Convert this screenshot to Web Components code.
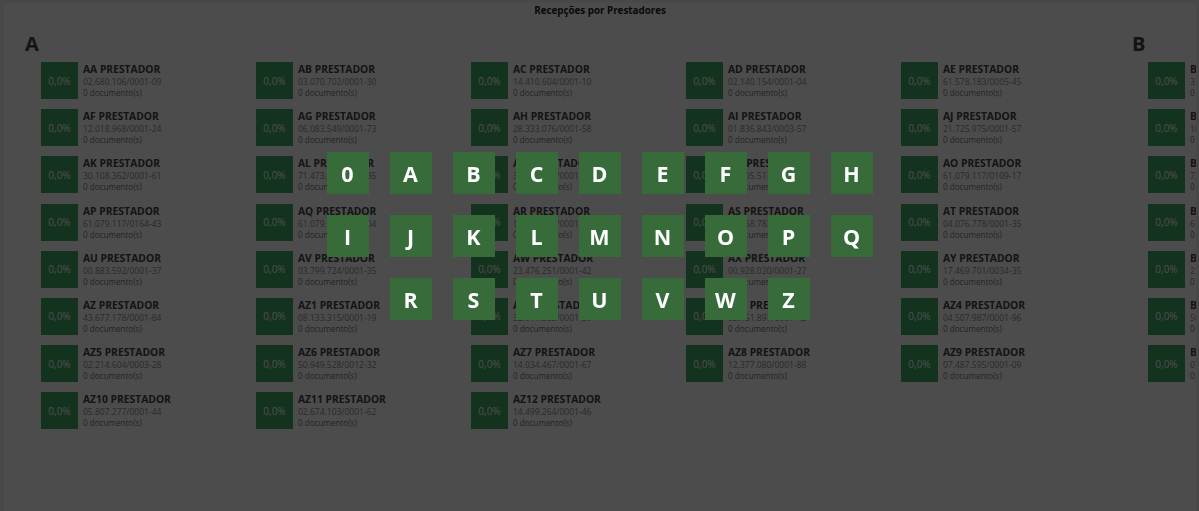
<!DOCTYPE html>
<html lang="pt-BR">
<head>
<meta charset="utf-8">
<title>Recepções por Prestadores</title>
<style>
  html, body { margin: 0; height: 100%; overflow: hidden; background: #f0f0f0; }
  body { font-family: "Open Sans", "Liberation Sans", sans-serif; }
</style>
</head>
<body>
<reception-board></reception-board>
<letter-picker></letter-picker>

<script>
const SECTIONS = {
  A: [
    ['AA', '02.680.106/0001-09'], ['AB', '03.070.702/0001-30'], ['AC', '14.410.604/0001-10'], ['AD', '02.140.154/0001-04'], ['AE', '61.578.183/0005-45'],
    ['AF', '12.018.968/0001-24'], ['AG', '06.083.549/0001-73'], ['AH', '28.333.076/0001-58'], ['AI', '01.836.843/0003-57'], ['AJ', '21.725.975/0001-57'],
    ['AK', '30.108.362/0001-61'], ['AL', '71.473.216/0001-35'], ['AM', '33.412.792/0001-60'], ['AN', '60.405.517/0001-21'], ['AO', '61.079.117/0109-17'],
    ['AP', '61.079.117/0164-43'], ['AQ', '61.079.117/0001-04'], ['AR', '17.220.345/0001-18'], ['AS', '10.858.783/0001-26'], ['AT', '04.076.778/0001-35'],
    ['AU', '00.883.592/0001-37'], ['AV', '03.799.724/0001-35'], ['AW', '23.476.251/0001-42'], ['AX', '00.928.020/0001-27'], ['AY', '17.469.701/0034-35'],
    ['AZ', '43.677.178/0001-84'], ['AZ1', '08.133.315/0001-19'], ['AZ2', '32.017.883/0001-39'], ['AZ3', '03.151.897/0001-42'], ['AZ4', '04.507.987/0001-96'],
    ['AZ5', '02.214.604/0003-28'], ['AZ6', '50.949.528/0012-32'], ['AZ7', '14.034.467/0001-67'], ['AZ8', '12.377.080/0001-88'], ['AZ9', '07.487.595/0001-09'],
    ['AZ10', '05.807.277/0001-44'], ['AZ11', '02.674.103/0001-62'], ['AZ12', '14.499.264/0001-46']
  ],
  B: [
    ['BA', '31.442.108/0001-20'], ['BF', '10.275.933/0001-51'], ['BK', '72.160.804/0001-13'], ['BP', '61.905.277/0001-08'],
    ['BU', '21.336.490/0001-74'], ['BZ', '50.118.726/0001-36'], ['BZ5', '07.593.241/0001-65']
  ]
};
const LETTERS = '0ABCDEFGHIJKLMNOPQRSTUVWZ'.split('');

class ProviderTile extends HTMLElement {
  constructor() {
    super();
    this.attachShadow({ mode: 'open' });
    this.shadowRoot.innerHTML = `
      <style>
        :host { display: flex; align-items: flex-start; gap: 5px; min-width: 0; }
        .percent {
          flex: none;
          display: flex;
          align-items: center;
          justify-content: center;
          width: 37px;
          height: 37px;
          background: #44aa66;
          color: #fff;
          font-size: 10px;
        }
        .info { display: flex; flex-direction: column; white-space: nowrap; padding-top: 1px; }
        .name { font-size: 10.3px; line-height: 13px; font-weight: 700; color: #444; }
        .doc { font-size: 8.5px; line-height: 12px; color: #8c8c8c; }
        .count { font-size: 8.1px; line-height: 9px; color: #777; }
      </style>
      <div class="percent">0,0%</div>
      <div class="info">
        <span class="name"></span>
        <span class="doc"></span>
        <span class="count">0 documento(s)</span>
      </div>
    `;
  }

  connectedCallback() {
    this.shadowRoot.querySelector('.name').textContent = this.getAttribute('name') + ' PRESTADOR';
    this.shadowRoot.querySelector('.doc').textContent = this.getAttribute('doc');
  }
}

class LetterSection extends HTMLElement {
  constructor() {
    super();
    this.attachShadow({ mode: 'open' });
    this.shadowRoot.innerHTML = `
      <style>
        :host { display: block; flex: none; width: 1107px; }
        h2 { margin: 0; font-size: 20px; line-height: 24px; font-weight: 700; color: #444; }
        .grid {
          display: grid;
          grid-template-columns: repeat(5, 215px);
          grid-auto-rows: 37.2px;
          row-gap: 10px;
          padding-left: 16px;
          margin-top: 6px;
        }
      </style>
      <h2></h2>
      <div class="grid"><slot></slot></div>
    `;
  }

  connectedCallback() {
    this.shadowRoot.querySelector('h2').textContent = this.getAttribute('letter');
  }
}

class ReceptionBoard extends HTMLElement {
  constructor() {
    super();
    this.attachShadow({ mode: 'open' });
    this.shadowRoot.innerHTML = `
      <style>
        :host { display: block; height: 100%; box-sizing: border-box; padding: 3px 3px 0 4px; }
        .page { height: 100%; background: #fff; overflow: hidden; }
        h1 { margin: 0; padding-top: 1px; font-size: 9.8px; line-height: 14px; font-weight: 700; text-align: center; color: #222; }
        .sections { display: flex; padding: 14px 0 0 21px; }
      </style>
      <div class="page">
        <h1>Recepções por Prestadores</h1>
        <div class="sections"></div>
      </div>
    `;
  }

  connectedCallback() {
    const sections = this.shadowRoot.querySelector('.sections');
    Object.keys(SECTIONS).forEach(letter => {
      const section = document.createElement('letter-section');
      section.setAttribute('letter', letter);
      SECTIONS[letter].forEach(([name, doc]) => {
        const tile = document.createElement('provider-tile');
        tile.setAttribute('name', name);
        tile.setAttribute('doc', doc);
        if (letter === 'B') tile.style.gridColumn = '1';
        section.appendChild(tile);
      });
      sections.appendChild(section);
    });
  }
}

class LetterPicker extends HTMLElement {
  constructor() {
    super();
    this.attachShadow({ mode: 'open' });
    this.shadowRoot.innerHTML = `
      <style>
        :host {
          display: block;
          position: fixed;
          inset: 0;
          background: rgba(0, 0, 0, .7);
          padding-top: 152px;
        }
        .keys {
          display: flex;
          flex-wrap: wrap;
          justify-content: center;
          gap: 21px;
          width: 546px;
          margin: 0 auto;
        }
        button {
          width: 42px;
          height: 42px;
          padding: 0;
          border: none;
          background: #376b3a;
          color: #fff;
          font: 700 21.5px "Open Sans", "Liberation Sans", sans-serif;
          cursor: pointer;
        }
      </style>
      <div class="keys"></div>
    `;
  }

  connectedCallback() {
    const keys = this.shadowRoot.querySelector('.keys');
    LETTERS.forEach(letter => {
      const key = document.createElement('button');
      key.textContent = letter;
      keys.appendChild(key);
    });
  }
}

customElements.define('provider-tile', ProviderTile);
customElements.define('letter-section', LetterSection);
customElements.define('reception-board', ReceptionBoard);
customElements.define('letter-picker', LetterPicker);
</script>
</body>
</html>
